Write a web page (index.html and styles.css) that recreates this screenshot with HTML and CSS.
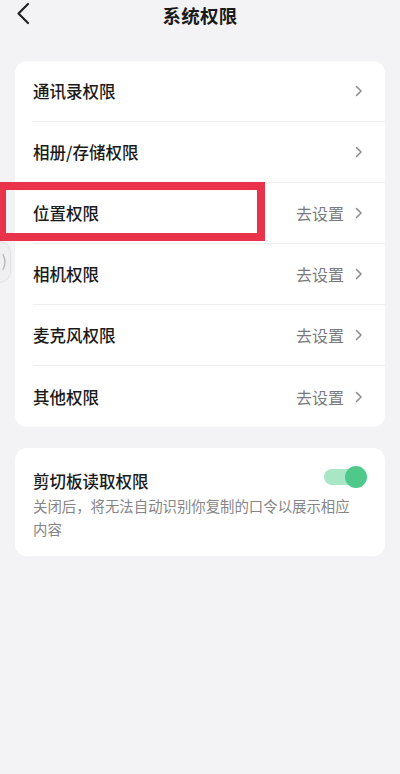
FILE: index.html
```html
<!DOCTYPE html>
<html lang="zh-CN">
<head>
<meta charset="utf-8">
<title>系统权限</title>
<link rel="stylesheet" href="styles.css">
</head>
<body>
<div class="page">
  <header class="topbar">
    <svg class="back" width="14" height="24" viewBox="0 0 14 24"><polyline points="12,2 2.5,11.5 12,21" fill="none" stroke="#222" stroke-width="2.2" stroke-linecap="round" stroke-linejoin="round"/></svg>
    <h1 class="title">系统权限</h1>
  </header>

  <section class="card list">
    <div class="row"><span class="label">通讯录权限</span><span class="right"><svg class="chev" width="8" height="12" viewBox="0 0 8 12"><polyline points="1.5,1.5 6,6 1.5,10.5" fill="none" stroke="#8a8a8a" stroke-width="1.5" stroke-linecap="round" stroke-linejoin="round"/></svg></span></div>
    <div class="row"><span class="label">相册/存储权限</span><span class="right"><svg class="chev" width="8" height="12" viewBox="0 0 8 12"><polyline points="1.5,1.5 6,6 1.5,10.5" fill="none" stroke="#8a8a8a" stroke-width="1.5" stroke-linecap="round" stroke-linejoin="round"/></svg></span></div>
    <div class="row"><span class="label">位置权限</span><span class="right"><span class="hint">去设置</span><svg class="chev" width="8" height="12" viewBox="0 0 8 12"><polyline points="1.5,1.5 6,6 1.5,10.5" fill="none" stroke="#8a8a8a" stroke-width="1.5" stroke-linecap="round" stroke-linejoin="round"/></svg></span></div>
    <div class="row"><span class="label">相机权限</span><span class="right"><span class="hint">去设置</span><svg class="chev" width="8" height="12" viewBox="0 0 8 12"><polyline points="1.5,1.5 6,6 1.5,10.5" fill="none" stroke="#8a8a8a" stroke-width="1.5" stroke-linecap="round" stroke-linejoin="round"/></svg></span></div>
    <div class="row"><span class="label">麦克风权限</span><span class="right"><span class="hint">去设置</span><svg class="chev" width="8" height="12" viewBox="0 0 8 12"><polyline points="1.5,1.5 6,6 1.5,10.5" fill="none" stroke="#8a8a8a" stroke-width="1.5" stroke-linecap="round" stroke-linejoin="round"/></svg></span></div>
    <div class="row"><span class="label">其他权限</span><span class="right"><span class="hint">去设置</span><svg class="chev" width="8" height="12" viewBox="0 0 8 12"><polyline points="1.5,1.5 6,6 1.5,10.5" fill="none" stroke="#8a8a8a" stroke-width="1.5" stroke-linecap="round" stroke-linejoin="round"/></svg></span></div>
  </section>

  <section class="card clip">
    <div class="clip-head">
      <span class="label">剪切板读取权限</span>
      <span class="toggle"><span class="track"></span><span class="knob"></span></span>
    </div>
    <p class="desc">关闭后，将无法自动识别你复制的口令以展示相应内容</p>
  </section>

  <div class="highlight"></div>
  <div class="edge-handle"><svg width="6" height="18" viewBox="0 0 6 18"><path d="M1 1.5 Q5 9 1 16.5" fill="none" stroke="#b8b8bc" stroke-width="1.4" stroke-linecap="round"/></svg></div>
</div>
</body>
</html>
```

FILE: styles.css
```css
html, body {
  margin: 0;
  padding: 0;
  background: #f3f3f5;
}
body {
  font-family: "Noto Sans CJK SC", "Noto Sans", sans-serif;
  color: #1c1c1e;
}
.page {
  position: relative;
  width: 400px;
  min-height: 774px;
  overflow: hidden;
}
.topbar {
  position: relative;
  height: 30px;
  display: flex;
  align-items: center;
  justify-content: center;
}
.back {
  position: absolute;
  left: 16px;
  top: 2px;
}
.title {
  margin: 0;
  font-size: 18.5px;
  font-weight: 700;
  line-height: 30px;
  letter-spacing: 0.3px;
  color: #1a1a1a;
}
.card {
  background: #fff;
  border-radius: 12px;
  margin: 0 15px;
}
.list {
  margin-top: 31px;
}
.row {
  height: 61px;
  display: flex;
  align-items: center;
  justify-content: space-between;
  margin-left: 18px;
  padding-right: 22px;
  border-bottom: 1px solid #efeff1;
  box-sizing: border-box;
}
.row:last-child {
  border-bottom: none;
}
.label {
  font-size: 16.5px;
  font-weight: 500;
  color: #1a1a1a;
}
.right {
  display: flex;
  align-items: center;
  gap: 11px;
}
.hint {
  font-size: 16px;
  color: #7a7a7c;
}
.chev {
  display: block;
}
.clip {
  margin-top: 21px;
  padding: 20px 18px 16px 18px;
}
.clip-head {
  display: flex;
  align-items: center;
  justify-content: space-between;
  height: 26px;
}
.toggle {
  position: relative;
  width: 43px;
  height: 22px;
  margin-top: -8px;
}
.track {
  position: absolute;
  left: 0;
  top: 3px;
  width: 40px;
  height: 16px;
  border-radius: 8px;
  background: #a9e6c6;
}
.knob {
  position: absolute;
  right: 0;
  top: 0;
  width: 22px;
  height: 22px;
  border-radius: 50%;
  background: #4fc98a;
}
.desc {
  margin: 0;
  max-width: 322px;
  font-size: 14.4px;
  line-height: 23px;
  color: #858587;
}
.highlight {
  position: absolute;
  left: -2px;
  top: 182px;
  width: 251px;
  height: 43px;
  border: 8px solid #e8334b;
}
.edge-handle {
  position: absolute;
  left: -1px;
  top: 241px;
  width: 11px;
  height: 40px;
  background: #efeff2;
  border: 1px solid #e2e2e6;
  border-left: none;
  border-radius: 0 12px 12px 0;
  display: flex;
  align-items: center;
  justify-content: center;
}
```
